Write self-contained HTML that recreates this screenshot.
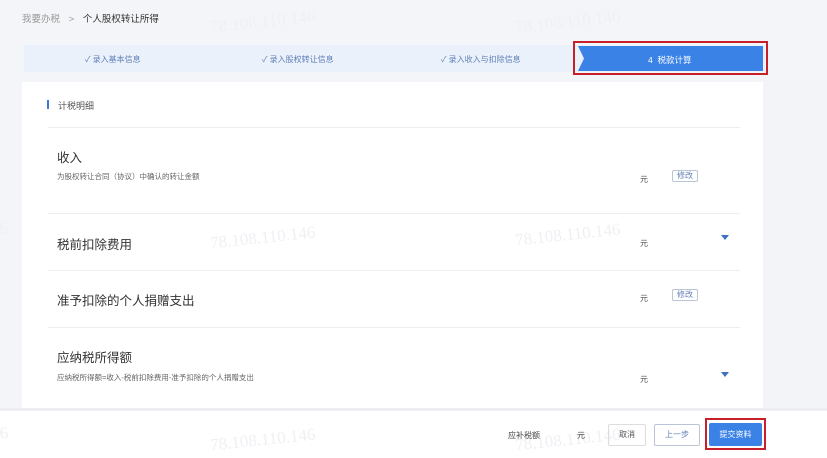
<!DOCTYPE html>
<html><head><meta charset="utf-8"><style>
*{margin:0;padding:0;box-sizing:border-box}
body{width:827px;height:458px;overflow:hidden;background:#f4f5f8;font-family:"Liberation Sans","Noto Sans CJK SC",sans-serif;position:relative;color:#333}
.a{position:absolute;white-space:nowrap}
.wm{position:absolute;color:#eef0f3;font-size:17px;transform:rotate(-6deg);font-family:"Liberation Serif",serif}
.h{font-size:12.5px;color:#333;left:57px}
.s{font-size:7.5px;color:#666;left:57px}
.y{font-size:8px;color:#555;left:640px}
.sep{position:absolute;left:48px;width:692px;height:1px;background:#eceef1}
.btn{position:absolute;border:1px solid #b9c4d6;border-radius:2px;font-size:8px;color:#6480b8;text-align:center}
.tri{position:absolute;width:0;height:0;border-left:4px solid transparent;border-right:4px solid transparent;border-top:5px solid #3e6fc4}
</style></head><body>
<div class="a" style="left:22px;top:11px;font-size:9.5px;color:#999">我要办税 <span style="margin:0 6px">&gt;</span> <span style="color:#333">个人股权转让所得</span></div>
<div class="wm" style="left:210px;top:12px">78.108.110.146</div>
<div class="wm" style="left:515px;top:12px">78.108.110.146</div>
<div class="a" style="left:24px;top:45px;width:741px;height:27px;background:#eaf1fb"></div>
<div class="a" style="left:85px;top:54px;font-size:8px;color:#5f7fb8">✓ 录入基本信息</div>
<div class="a" style="left:262px;top:54px;font-size:8px;color:#5f7fb8">✓ 录入股权转让信息</div>
<div class="a" style="left:441px;top:54px;font-size:8px;color:#5f7fb8">✓ 录入收入与扣除信息</div>
<svg class="a" style="left:575px;top:45px" width="190" height="27"><path d="M3 1H188V26H3L9 13.5Z" fill="#3b82e6"/></svg>
<div class="a" style="left:648px;top:54px;font-size:8.5px;color:#fff">4&nbsp; 税款计算</div>
<div class="a" style="left:573px;top:41px;width:195px;height:34px;border:2px solid #c8202a"></div>
<div class="a" style="left:22px;top:82px;width:741px;height:327px;background:#fff"></div>
<div class="a" style="left:763px;top:80px;width:64px;height:330px;background:#f3f4f7"></div>
<div class="a" style="left:47px;top:100px;width:2px;height:9px;background:#3b78d8"></div>
<div class="a" style="left:58px;top:99px;font-size:9px;color:#555">计税明细</div>
<div class="sep" style="top:127px"></div>
<div class="a h" style="top:147px">收入</div>
<div class="a s" style="top:171px">为股权转让合同（协议）中确认的转让金额</div>
<div class="a y" style="top:174px">元</div>
<div class="btn" style="left:672px;top:170px;width:26px;height:12px;line-height:10px">修改</div>
<div class="sep" style="top:213px"></div>
<div class="wm" style="left:210px;top:228px">78.108.110.146</div>
<div class="wm" style="left:515px;top:225px">78.108.110.146</div>
<div class="wm" style="left:-30px;top:220px">0.146</div>
<div class="a h" style="top:234px">税前扣除费用</div>
<div class="a y" style="top:238px">元</div>
<div class="tri" style="left:721px;top:235px"></div>
<div class="sep" style="top:270px"></div>
<div class="a h" style="top:290px">准予扣除的个人捐赠支出</div>
<div class="a y" style="top:293px">元</div>
<div class="btn" style="left:672px;top:289px;width:26px;height:12px;line-height:10px">修改</div>
<div class="sep" style="top:327px"></div>
<div class="a h" style="top:347px">应纳税所得额</div>
<div class="a s" style="top:372px">应纳税所得额=收入-税前扣除费用-准予扣除的个人捐赠支出</div>
<div class="a y" style="top:374px">元</div>
<div class="tri" style="left:721px;top:372px"></div>
<div class="a" style="left:0;top:408px;width:827px;height:3px;background:#eceef1"></div>
<div class="a" style="left:0;top:411px;width:827px;height:47px;background:#fff"></div>
<div class="wm" style="left:210px;top:430px">78.108.110.146</div>
<div class="wm" style="left:515px;top:430px">78.108.110.146</div>
<div class="wm" style="left:-30px;top:425px">0.146</div>
<div class="a" style="left:508px;top:430px;font-size:8px;color:#444">应补税额</div>
<div class="a" style="left:577px;top:430px;font-size:8px;color:#444">元</div>
<div class="btn" style="left:608px;top:424px;width:38px;height:22px;line-height:20px;color:#555;border-color:#ddd">取消</div>
<div class="btn" style="left:654px;top:424px;width:46px;height:22px;line-height:20px">上一步</div>
<div class="a" style="left:709px;top:423px;width:53px;height:23px;background:#3b82e6;border-radius:2px;color:#fff;font-size:8px;text-align:center;line-height:23px">提交资料</div>
<div class="a" style="left:705px;top:418px;width:61px;height:32px;border:2px solid #c8202a"></div>
</body></html>
